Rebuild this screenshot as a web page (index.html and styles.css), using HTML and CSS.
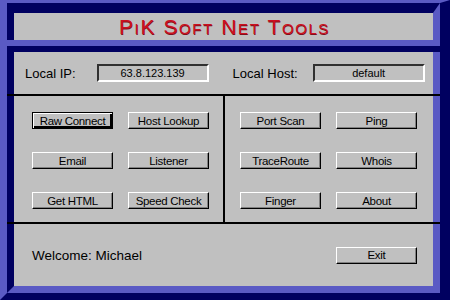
FILE: index.html
```html
<!DOCTYPE html>
<html lang="en">
<head>
  <meta charset="UTF-8" />
  <title>PiK Soft Net Tools</title>
  <link rel="stylesheet" href="styles.css">
</head>
<body>

  <div class="frame">
    <div class="inner">

      <!-- Title -->
      <div class="title-bar">
        <h1>PiK Soft Net Tools</h1>
      </div>
      <div class="band"></div>

      <!-- Local info -->
      <div class="info">
        <div class="info-item">
          <span class="label">Local IP:</span>
          <div class="field field-ip">63.8.123.139</div>
        </div>
        <div class="info-item">
          <span class="label">Local Host:</span>
          <div class="field field-host">default</div>
        </div>
      </div>
      <div class="rule"></div>

      <!-- Tools -->
      <div class="tools">
        <div class="panel panel-left">
          <button class="btn default">Raw Connect</button>
          <button class="btn">Host Lookup</button>
          <button class="btn">Email</button>
          <button class="btn">Listener</button>
          <button class="btn">Get HTML</button>
          <button class="btn">Speed Check</button>
        </div>
        <div class="vrule"></div>
        <div class="panel panel-right">
          <button class="btn">Port Scan</button>
          <button class="btn">Ping</button>
          <button class="btn">TraceRoute</button>
          <button class="btn">Whois</button>
          <button class="btn">Finger</button>
          <button class="btn">About</button>
        </div>
      </div>
      <div class="rule"></div>

      <!-- Footer -->
      <div class="footer">
        <span class="welcome">Welcome: Michael</span>
        <button class="btn">Exit</button>
      </div>

    </div>
  </div>

</body>
</html>
```

FILE: styles.css
```css
* {
  box-sizing: border-box;
}

body {
  margin: 0;
  width: 450px;
  height: 300px;
  overflow: hidden;
  font-family: 'Liberation Sans', Arial, sans-serif;
  background: #c0c0c0;
}

/* beveled blue frame */
.frame {
  width: 450px;
  height: 300px;
  border-style: solid;
  border-width: 3px 10px 7px 7px;
  border-color: #5a5ac4 #000060 #000060 #5a5ac4;
}

.inner {
  height: 100%;
  background: #c0c0c0;
  border-style: solid;
  border-width: 10px 7px 7px 7px;
  border-color: #000060 #5a5ac4 #5a5ac4 #000060;
  display: flex;
  flex-direction: column;
}

.title-bar {
  height: 27px;
  display: flex;
  justify-content: center;
  align-items: center;
}

h1 {
  margin: 0;
  font-family: 'Liberation Sans', Arial, sans-serif;
  font-weight: normal;
  font-variant: small-caps;
  font-size: 21px;
  letter-spacing: 1.6px;
  color: #cc1020;
  text-shadow: 0.5px 0.5px 0 #80101c;
  padding-top: 1px;
  margin-left: 2px;
}

.band {
  height: 12px;
  margin: 0 -7px;
  border-top: 6px solid #5a5ac4;
  border-bottom: 6px solid #000060;
}

.info {
  height: 42px;
  display: flex;
  align-items: center;
  padding-left: 11px;
  gap: 24px;
}

.info-item {
  display: flex;
  align-items: center;
  gap: 21px;
}

.label {
  font-size: 13px;
  color: #000;
}

.field {
  width: 112px;
  height: 18px;
  font-size: 11px;
  text-align: center;
  line-height: 14px;
  border: 2px solid;
  border-color: #303030 #fff #fff #303030;
}

.field-host {
  margin-left: -6px;
}

.rule {
  height: 2px;
  margin: 0 -7px;
  background: #000;
}

.tools {
  height: 126px;
  display: flex;
}

.vrule {
  width: 2px;
  background: #000;
}

.panel {
  display: grid;
  grid-template-columns: 81px 81px;
  grid-auto-rows: 17px;
  column-gap: 15px;
  row-gap: 23px;
  padding-top: 16px;
}

.panel-left {
  width: 209px;
  padding-left: 18px;
}

.panel-right {
  padding-left: 15px;
}

.btn {
  width: 81px;
  height: 17px;
  padding: 0;
  font-family: 'Liberation Sans', Arial, sans-serif;
  font-size: 11.5px;
  letter-spacing: -0.3px;
  color: #000;
  background: #c0c0c0;
  border: 1px solid;
  border-color: #fff #000 #000 #fff;
  box-shadow: inset -1px -1px 0 #808080;
}

.btn.default {
  border-color: #000;
  box-shadow: inset 1px 1px 0 #fff, inset -2px -2px 0 #000;
}

.footer {
  flex: 1;
  display: flex;
  align-items: center;
  justify-content: space-between;
  padding: 0 16px 0 18px;
}

.welcome {
  font-size: 13.5px;
  color: #000;
}
```
